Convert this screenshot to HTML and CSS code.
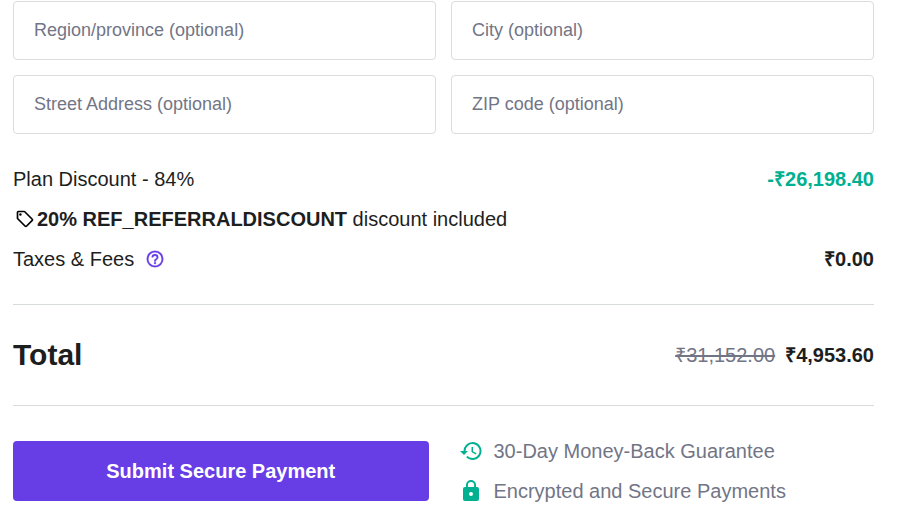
FILE: index.html
```html
<!DOCTYPE html>
<html lang="en">
<head>
<meta charset="utf-8">
<meta name="viewport" content="width=device-width, initial-scale=1">
<title>Checkout</title>
<link rel="stylesheet" href="styles.css">
</head>
<body>
<form class="checkout">
  <div class="fields">
    <input class="field" type="text" aria-label="Region/province (optional)" placeholder="Region/province (optional)">
    <input class="field" type="text" aria-label="City (optional)" placeholder="City (optional)">
    <input class="field" type="text" aria-label="Street Address (optional)" placeholder="Street Address (optional)">
    <input class="field" type="text" aria-label="ZIP code (optional)" placeholder="ZIP code (optional)">
  </div>

  <div class="summary">
    <div class="row">
      <span>Plan Discount - 84%</span>
      <strong class="saving">-₹26,198.40</strong>
    </div>
    <div class="row coupon">
      <svg class="tag" viewBox="0 0 24 24" aria-hidden="true"><path fill="currentColor" d="M21.41 11.58l-9-9A2 2 0 0 0 11 2H4a2 2 0 0 0-2 2v7c0 .53.21 1.04.59 1.41l9 9c.78.79 2.04.79 2.82 0l7-7a2 2 0 0 0 0-2.83zM13 20l-9-9V4h7l9 9-7 7z"/><circle cx="6.5" cy="6.5" r="1.5" fill="currentColor"/></svg>
      <span><strong>20% REF_REFERRALDISCOUNT</strong> discount included</span>
    </div>
    <div class="row">
      <span class="taxes">Taxes &amp; Fees
        <svg class="help" viewBox="0 0 24 24" aria-hidden="true"><path fill="currentColor" stroke="currentColor" stroke-width=".3" d="M11 18h2v-2h-2v2zm1-16a10 10 0 1 0 0 20 10 10 0 0 0 0-20zm0 18a8 8 0 1 1 0-16 8 8 0 0 1 0 16zm0-14a4 4 0 0 0-4 4h2a2 2 0 1 1 4 0c0 2-3 1.75-3 5h2c0-2.25 3-2.5 3-5a4 4 0 0 0-4-4z"/></svg>
      </span>
      <strong>₹0.00</strong>
    </div>
  </div>

  <div class="total">
    <h2 class="total-label">Total</h2>
    <div class="prices">
      <s class="old-price">₹31,152.00</s>
      <strong>₹4,953.60</strong>
    </div>
  </div>

  <div class="actions">
    <button class="submit" type="button">Submit Secure Payment</button>
    <ul class="perks">
      <li class="perk">
        <svg class="perk-icon" viewBox="0 0 24 24" aria-hidden="true"><path fill="currentColor" d="M13.5 3a9 9 0 0 0-9 9H1l4 4 4-4H6.500a7 7 0 1 1 2.050 4.950l-1.420 1.420A9 9 0 1 0 13.500 3zM12.500 8v5l4.280 2.540.72-1.210-3.500-2.080V8z"/></svg>
        30-Day Money-Back Guarantee
      </li>
      <li class="perk">
        <svg class="perk-icon" viewBox="0 0 24 24" aria-hidden="true"><path fill="currentColor" d="M18 8h-1V6A5 5 0 0 0 7 6v2H6a2 2 0 0 0-2 2v10c0 1.100.9 2 2 2h12a2 2 0 0 0 2-2V10a2 2 0 0 0-2-2zm-6 9a2 2 0 1 1 0-4 2 2 0 0 1 0 4zM8.900 8V6a3.100 3.100 0 0 1 6.200 0v2z"/></svg>
        Encrypted and Secure Payments
      </li>
    </ul>
  </div>
</form>
</body>
</html>
```
FILE: styles.css
```css
* {
  box-sizing: border-box;
}

body {
  margin: 0;
  background: #fff;
  color: #1d1e20;
  font: 20px/24px "Liberation Sans", Arial, sans-serif;
}

.checkout {
  padding: 1px 24px 24px 13px;
}

.fields {
  display: grid;
  grid-template-columns: 1fr 1fr;
  gap: 15px;
}

.field {
  width: 100%;
  min-width: 0;
  height: 59px;
  padding: 0 20px;
  border: 1px solid #dadce0;
  border-radius: 4px;
  background: #fff;
  color: inherit;
  font: inherit;
  font-size: 18px;
}

.field::placeholder {
  color: #727586;
  opacity: 1;
}

.summary {
  display: grid;
  gap: 16px;
  padding: 33px 0;
  border-bottom: 1px solid #d8dbdb;
}

.row {
  display: flex;
  align-items: center;
  justify-content: space-between;
}

.saving {
  color: #00b090;
}

.coupon {
  justify-content: flex-start;
  gap: 2px;
  padding-left: 2px;
}

.tag {
  width: 20px;
  height: 20px;
  color: #000;
}

.taxes {
  display: flex;
  align-items: center;
  gap: 11px;
}

.help {
  width: 20px;
  height: 20px;
  color: #673de6;
}

.total {
  display: flex;
  align-items: center;
  justify-content: space-between;
  padding: 32px 0;
  border-bottom: 1px solid #d8dbdb;
}

.total-label {
  margin: 0;
  font-size: 30px;
  line-height: 36px;
}

.prices {
  display: flex;
  gap: 10px;
}

.old-price {
  color: #727586;
}

.actions {
  display: grid;
  grid-template-columns: 1fr 1fr;
  align-items: center;
  gap: 30px;
  padding-top: 33px;
}

.submit {
  height: 60px;
  border: 0;
  border-radius: 4px;
  background: #673de6;
  color: #fff;
  font: inherit;
  font-weight: 700;
}

.perks {
  display: grid;
  gap: 16px;
  margin: 0;
  padding: 0;
  list-style: none;
  color: #727586;
}

.perk {
  display: flex;
  align-items: center;
  gap: 11px;
}

.perk-icon {
  width: 24px;
  height: 24px;
  color: #00b090;
}
```
